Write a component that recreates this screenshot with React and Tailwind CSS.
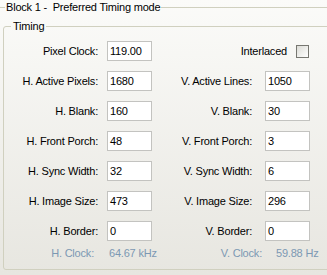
import React from "react";

const rows = [
  ["H. Active Pixels:", "1680", "V. Active Lines:", "1050"],
  ["H. Blank:", "160", "V. Blank:", "30"],
  ["H. Front Porch:", "48", "V. Front Porch:", "3"],
  ["H. Sync Width:", "32", "V. Sync Width:", "6"],
  ["H. Image Size:", "473", "V. Image Size:", "296"],
  ["H. Border:", "0", "V. Border:", "0"],
];

const Field = ({ value }) => (
  <div className="w-[45px] h-[20px] bg-white border border-[#c3c3c0] pl-[2px] flex items-center">
    {value}
  </div>
);

const App = () => {
  return (
    <div className="w-[327px] h-[275px] overflow-hidden bg-gradient-to-b from-[#fbfbf9] to-[#e7e6e0] font-['Liberation_Sans',Arial,sans-serif] text-[11px] leading-[13px] tracking-[-0.2px] text-black">
      <fieldset className="-ml-[3px] w-[345px] border border-[#d0d0bf] rounded-[3px] pl-[7px] pt-[4px] pb-[20px]">
        <legend className="px-[1px] leading-[15px]">Block 1 -&nbsp; Preferred Timing mode</legend>

        <fieldset className="-ml-[2px] w-[340px] border border-[#d0d0bf] rounded-[3px] pl-[7px] pt-[7px] pb-[9px]">
          <legend className="px-[2px] leading-[15px]">Timing</legend>

          <div className="flex flex-col gap-[10px]">
            <div className="flex items-center h-[20px]">
              <span className="w-[87px] text-right">Pixel Clock:</span>
              <div className="ml-[9px]">
                <Field value="119.00" />
              </div>
              <span className="w-[135px] text-right">Interlaced</span>
              <span className="ml-[9px] w-[13px] h-[13px] border border-[#777771] bg-gradient-to-br from-[#dcdcd6] to-white" />
            </div>

            {rows.map(([hl, hv, vl, vv]) => (
              <div key={hl} className="flex items-center h-[20px]">
                <span className="w-[87px] text-right">{hl}</span>
                <div className="ml-[9px]">
                  <Field value={hv} />
                </div>
                <span className="w-[100px] text-right">{vl}</span>
                <div className="ml-[13px]">
                  <Field value={vv} />
                </div>
              </div>
            ))}
          </div>

          <div className="flex items-center h-[13px] mt-[6px] text-[#7c98b3]">
            <span className="w-[83px] text-right">H. Clock:</span>
            <span className="ml-[15px] w-[55px]">64.67 kHz</span>
            <span className="w-[98px] text-right">V. Clock:</span>
            <span className="ml-[14px]">59.88 Hz</span>
          </div>
        </fieldset>
      </fieldset>
    </div>
  );
};

export default App;
